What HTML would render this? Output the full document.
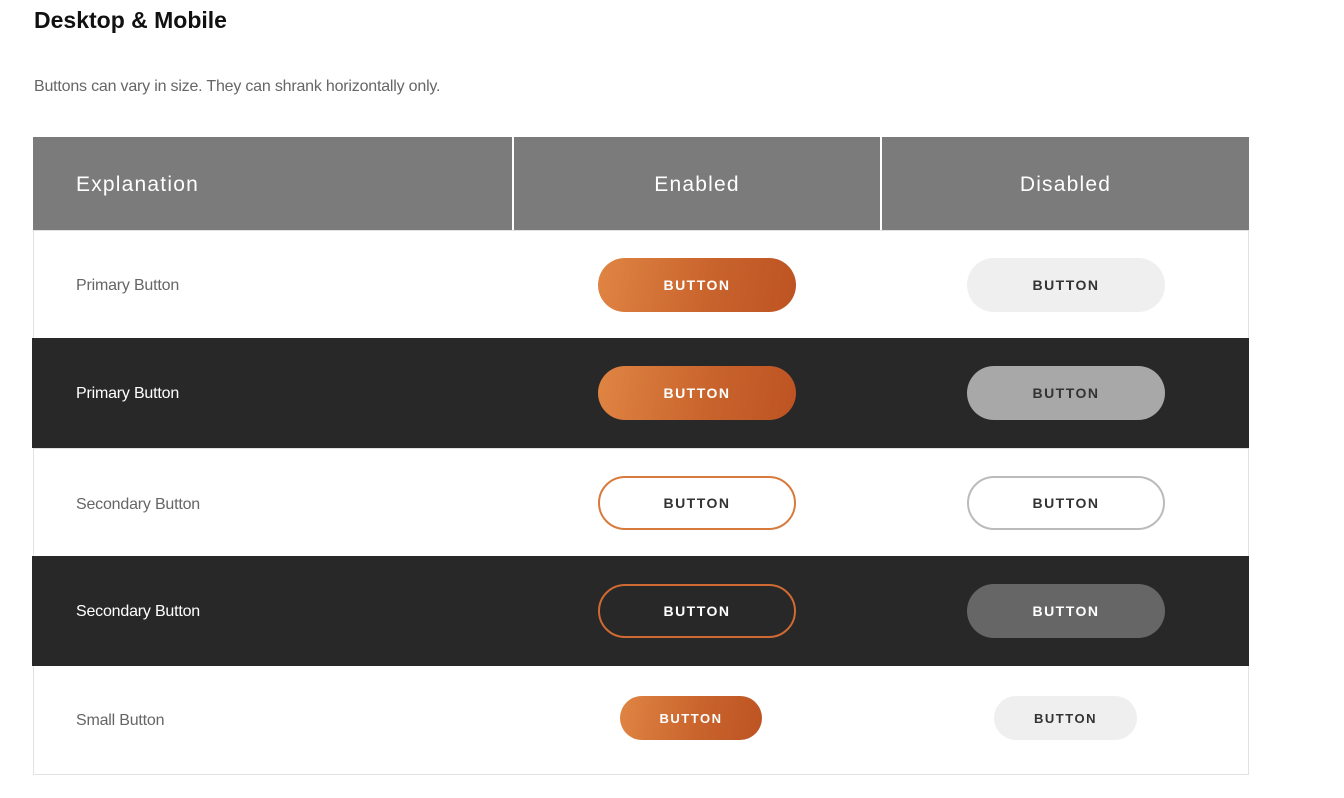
<!DOCTYPE html>
<html><head><meta charset="utf-8"><style>
*{margin:0;padding:0;box-sizing:border-box}
body{width:1344px;height:798px;background:#fff;font-family:"Liberation Sans",sans-serif;position:relative;overflow:hidden}
.a{position:absolute}
h1{position:absolute;left:34px;top:7px;font-size:23px;font-weight:bold;color:#111}
.sub{left:34px;top:78px;font-size:16px;color:#666;letter-spacing:-0.2px}
.hd{top:137px;height:93px;background:#7b7b7b;color:#fff;font-size:21px;letter-spacing:1.2px;display:flex;align-items:center;padding-top:2px}
.row{left:33px;width:1216px;border-left:1px solid #e2e2e2;border-right:1px solid #e2e2e2}
.lbl{position:absolute;left:42px;font-size:16px;letter-spacing:-0.2px}
.btn{position:absolute;border-radius:28px;display:flex;align-items:center;justify-content:center;font-size:14px;font-weight:bold;letter-spacing:1.5px}
.or{background:linear-gradient(100deg,#e08544,#c9642d 55%,#bd5322);color:#fff}
</style></head><body>
<h1>Desktop &amp; Mobile</h1>
<div class="a sub">Buttons can vary in size. They can shrank horizontally only.</div>
<div class="a hd" style="left:33px;width:479px;padding-left:43px">Explanation</div>
<div class="a hd" style="left:514px;width:366px;justify-content:center">Enabled</div>
<div class="a hd" style="left:882px;width:367px;justify-content:center">Disabled</div>

<div class="a row" style="top:230px;height:108px;background:#fff;border-top:1px solid #e2e2e2"><span class="lbl" style="top:46px;color:#666">Primary Button</span></div>
<div class="a row" style="top:338px;height:110px;background:#282828;left:32px;width:1217px;border:none"><span class="lbl" style="top:47px;left:44px;color:#fff">Primary Button</span></div>
<div class="a row" style="top:448px;height:108px;background:#fff;border-top:1px solid #e2e2e2"><span class="lbl" style="top:47px;color:#666">Secondary Button</span></div>
<div class="a row" style="top:556px;height:110px;background:#282828;left:32px;width:1217px;border:none"><span class="lbl" style="top:47px;left:44px;color:#fff">Secondary Button</span></div>
<div class="a row" style="top:666px;height:109px;background:#fff;border-bottom:1px solid #e2e2e2"><span class="lbl" style="top:46px;color:#666">Small Button</span></div>

<div class="btn or" style="left:598px;top:258px;width:198px;height:54px">BUTTON</div>
<div class="btn" style="left:967px;top:258px;width:198px;height:54px;background:#efefef;color:#333">BUTTON</div>
<div class="btn or" style="left:598px;top:366px;width:198px;height:54px">BUTTON</div>
<div class="btn" style="left:967px;top:366px;width:198px;height:54px;background:#a8a8a8;color:#333">BUTTON</div>
<div class="btn" style="left:598px;top:476px;width:198px;height:54px;border:2px solid #d87a3d;color:#333">BUTTON</div>
<div class="btn" style="left:967px;top:476px;width:198px;height:54px;border:2px solid #bbb;color:#333">BUTTON</div>
<div class="btn" style="left:598px;top:584px;width:198px;height:54px;border:2px solid #cf6a32;color:#fff">BUTTON</div>
<div class="btn" style="left:967px;top:584px;width:198px;height:54px;background:#666;color:#fff">BUTTON</div>
<div class="btn or" style="left:620px;top:696px;width:142px;height:44px;font-size:13px;border-radius:22px">BUTTON</div>
<div class="btn" style="left:994px;top:696px;width:143px;height:44px;font-size:13px;border-radius:22px;background:#efefef;color:#333">BUTTON</div>
</body></html>
